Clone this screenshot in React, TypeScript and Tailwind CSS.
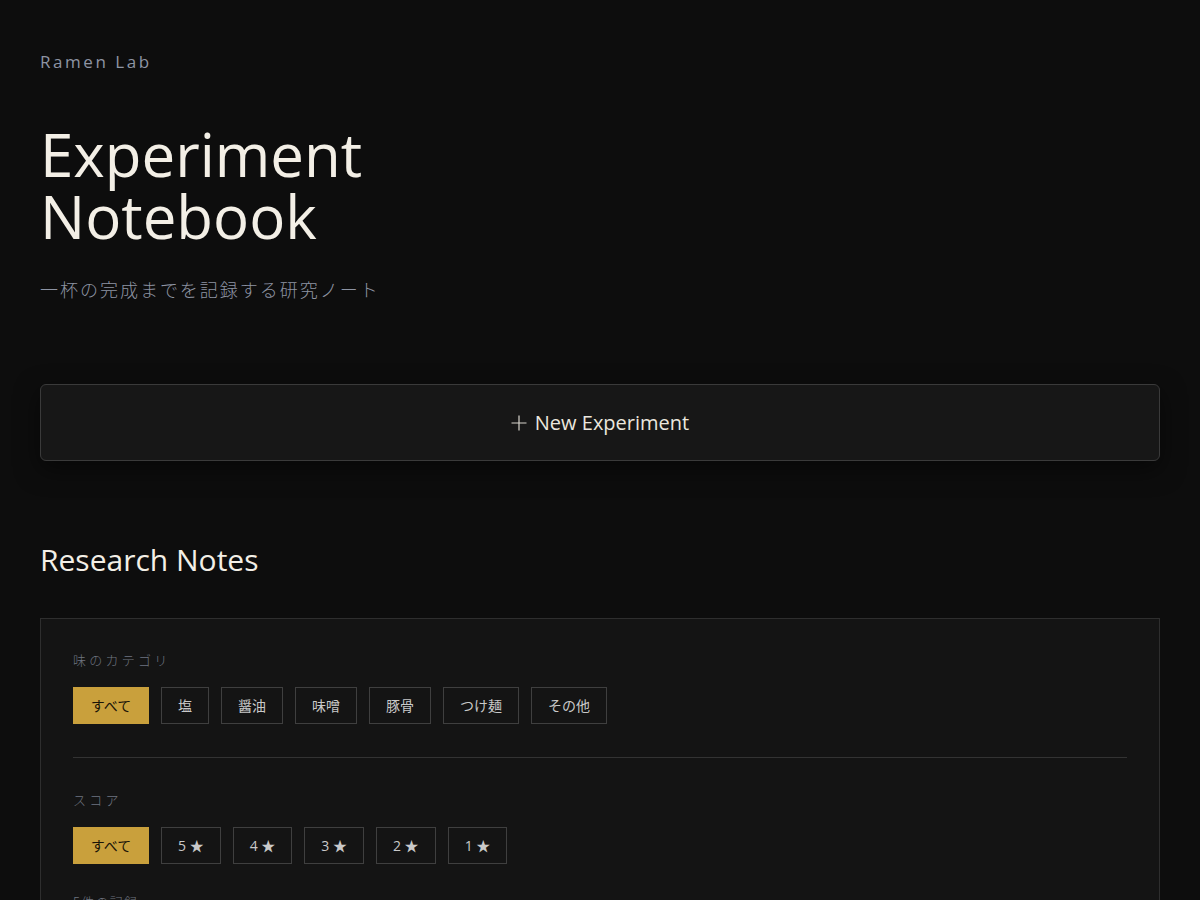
import { useState } from 'react';

const categories = ['すべて', '塩', '醤油', '味噌', '豚骨', 'つけ麺', 'その他'];
const scores = ['すべて', '5 ★', '4 ★', '3 ★', '2 ★', '1 ★'];

const latin = "font-['Open_Sans','Noto_Sans_CJK_JP',sans-serif]";
const jp = "font-['Noto_Sans_CJK_JP',sans-serif]";

function FilterGroup({ label, items }: { label: string; items: string[] }) {
    const [active, setActive] = useState(items[0]);

    return (
        <div className="flex flex-col">
            <p className={`${jp} font-light text-[13px] leading-5 tracking-[0.25em] text-[#6f7480] mb-[17px]`}>{label}</p>
            <div className="flex flex-wrap gap-3">
                {items.map((item, i) => (
                    <button
                        key={item}
                        onClick={() => setActive(item)}
                        className={`${latin} h-[37px] px-4 text-[14px] border ${i === 0 ? 'min-w-[76px]' : ''} ${active === item
                            ? 'bg-[#c9a03c] border-[#c9a03c] text-[#1a1408]'
                            : 'bg-transparent border-[#3f3f3f] text-[#c9c9c9]'
                            }`}
                    >
                        {item}
                    </button>
                ))}
            </div>
        </div>
    );
}

export default function App() {
    return (
        <div className={`${latin} min-h-screen bg-[#0d0d0d] text-[#f3efe6] px-10 pt-12 pb-16`}>
            {/* Header */}
            <p className="text-[17px] leading-7 tracking-[0.15em] text-[#8d94a3]">Ramen Lab</p>
            <h1 className="mt-[47px] text-[60px] leading-[62px] text-[#f3efe6]">
                Experiment
                <br />
                Notebook
            </h1>
            <p className={`${jp} font-light mt-[28px] text-[18px] leading-7 tracking-[0.11em] text-[#8d94a3]`}>
                一杯の完成までを記録する研究ノート
            </p>

            {/* New experiment */}
            <button className="mt-[81px] w-full h-[77px] flex items-center justify-center gap-2 rounded-md border border-[#3a3a3a] bg-[#171717] shadow-[0_8px_24px_rgba(0,0,0,0.5)] text-[20px] text-[#ebe7de]">
                <svg width="16" height="16" viewBox="0 0 16 16" className="text-[#d8d4cc]">
                    <path d="M8 0.5V15.5M0.5 8H15.5" stroke="currentColor" strokeWidth="1.2" />
                </svg>
                New Experiment
            </button>

            {/* Research notes */}
            <h2 className="mt-[81px] text-[30px] leading-9 text-[#f3efe6]">Research Notes</h2>

            <div className="mt-10 border border-[#2e2e2e] bg-[#141414] px-8 pt-[31px] pb-10">
                <FilterGroup label="味のカテゴリ" items={categories} />
                <div className="mt-[33px] mb-8 h-px bg-[#333333]" />
                <FilterGroup label="スコア" items={scores} />
                <p className={`${jp} font-light mt-7 text-[13px] leading-5 tracking-[0.1em] text-[#6f7480]`}>5件の記録</p>
            </div>
        </div>
    );
}
